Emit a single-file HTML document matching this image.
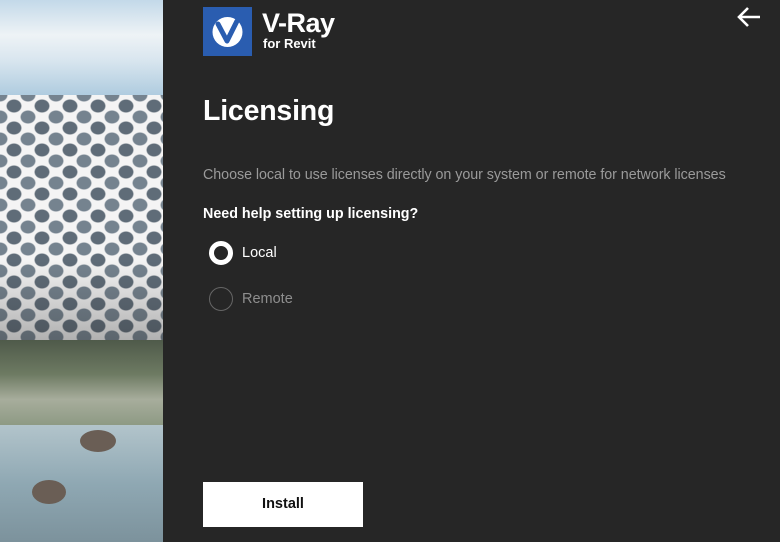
<!DOCTYPE html>
<html><head><meta charset="utf-8"><style>
html,body{margin:0;padding:0;width:780px;height:542px;overflow:hidden;background:#262626;font-family:"Liberation Sans",sans-serif}
.left{position:absolute;left:0;top:0;width:163px;height:542px;overflow:hidden}
.sky{position:absolute;left:0;top:0;width:163px;height:100px;background:linear-gradient(180deg,#c3d9e9 0%,#eef3f6 35%,#d9e6ef 60%,#a9c8dd 100%)}
.fac{position:absolute;left:0;top:95px;width:163px;height:250px;background-color:#f4f4f4;
background-image:radial-gradient(ellipse 8px 7px at 50% 50%,#5f6c78 0 85%,transparent 100%),radial-gradient(ellipse 8px 7px at 50% 50%,#75838f 0 85%,transparent 100%);
background-size:28px 22px,28px 22px;background-position:0 0,14px 11px}
.fac2{position:absolute;left:0;top:260px;width:163px;height:85px;background:linear-gradient(180deg,rgba(40,40,40,0) 0%,rgba(40,40,40,.35) 100%)}
.ground{position:absolute;left:0;top:340px;width:163px;height:85px;background:linear-gradient(180deg,#4f5a4a 0%,#6d7a62 40%,#a7ad9c 70%,#8e9a84 100%)}
.water{position:absolute;left:0;top:425px;width:163px;height:117px;background:linear-gradient(180deg,#b2c4cb 0%,#8fa8b3 50%,#7c929c 100%)}
.rock{position:absolute;border-radius:50%;background:#6a5e55}
.right{position:absolute;left:163px;top:0;width:617px;height:542px;background:#262626}
.logo{position:absolute;left:203px;top:7px;width:49px;height:49px;background:#2a5db0}
.vr{position:absolute;left:262px;top:8px;color:#fff;font-weight:bold;font-size:27px;letter-spacing:-0.5px}
.fr{position:absolute;left:263px;top:36px;color:#fff;font-weight:bold;font-size:13px}
h1{position:absolute;left:203px;top:95px;margin:0;color:#fff;font-size:28.5px;font-weight:bold;letter-spacing:-0.2px}
.desc{position:absolute;left:203px;top:167px;color:#9a9a9a;font-size:14.3px;letter-spacing:-0.05px}
.help{position:absolute;left:203px;top:206px;color:#fff;font-size:14.3px;font-weight:bold}
.r{position:absolute;left:209px;width:24px;height:24px;border-radius:50%;box-sizing:border-box}
.lbl{position:absolute;left:242px;font-size:14.5px}
.btn{position:absolute;left:203px;top:482px;width:160px;height:45px;background:#fff;color:#111;font-weight:bold;font-size:14.5px;text-align:center;line-height:45px}
</style></head><body>
<div class="left">
<div class="sky"></div>
<div class="fac"></div><div class="fac2"></div>
<div class="ground"></div>
<div class="water"></div>
<div class="rock" style="left:80px;top:430px;width:36px;height:22px"></div>
<div class="rock" style="left:32px;top:480px;width:34px;height:24px"></div>
</div>
<div class="right"></div>
<div class="logo"><svg width="49" height="49" viewBox="0 0 49 49"><circle cx="24.5" cy="25" r="15" fill="#fff"/><path d="M15 17 L24 34 L34 14" fill="none" stroke="#2a5db0" stroke-width="5" stroke-linecap="round" stroke-linejoin="round"/></svg></div>
<div class="vr">V-Ray</div>
<div class="fr">for Revit</div>
<svg style="position:absolute;left:736px;top:6px" width="26" height="22" viewBox="0 0 26 22"><path d="M24 11 H3 M12 2 L3 11 L12 20" fill="none" stroke="#fff" stroke-width="2.6"/></svg>
<h1>Licensing</h1>
<div class="desc">Choose local to use licenses directly on your system or remote for network licenses</div>
<div class="help">Need help setting up licensing?</div>
<div class="r" style="top:241px;border:5px solid #fff;background:#262626"></div>
<div class="lbl" style="top:245px;color:#fff">Local</div>
<div class="r" style="top:287px;border:1.5px solid #666"></div>
<div class="lbl" style="top:291px;color:#8e8e8e">Remote</div>
<div class="btn">Install</div>
</body></html>
